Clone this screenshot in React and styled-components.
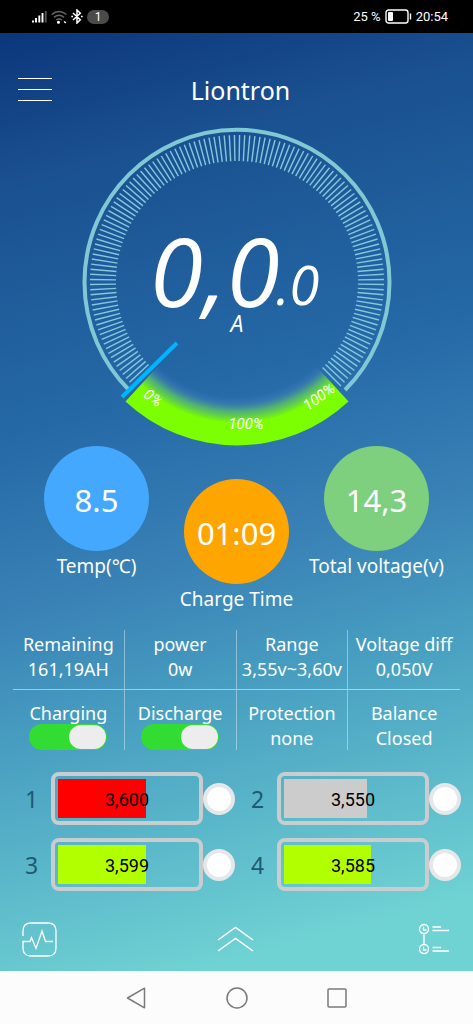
import React from "react"
import styled, { createGlobalStyle } from "styled-components"

const GlobalStyle = createGlobalStyle`
  * {
    box-sizing: border-box;
  }
  body {
    margin: 0;
    font-family: "Noto Sans", "Noto Sans CJK SC", sans-serif;
    color: #fff;
  }
  button {
    display: flex;
    padding: 0;
    border: 0;
    background: none;
    color: inherit;
    cursor: pointer;
  }
`

const Screen = styled.div`
  display: flex;
  flex-direction: column;
  min-height: 100vh;
`

const StatusBar = styled.div`
  display: flex;
  align-items: center;
  justify-content: space-between;
  height: 33px;
  padding: 0 25px 0 32px;
  background: #000;
  font: 13px/18px Roboto, sans-serif;
`

const StatusGroup = styled.div`
  display: flex;
  align-items: center;
  gap: 4px;
`

const Badge = styled.span`
  width: 22px;
  border-radius: 7px;
  background: #4b4b4b;
  font-size: 12px;
  line-height: 14px;
  text-align: center;
`

const Main = styled.main`
  display: flex;
  flex: 1;
  flex-direction: column;
  background: linear-gradient(
    165deg,
    #0b367b 0%,
    #1a508f 14%,
    #2569a7 38%,
    #3982b6 55%,
    #489fc1 68%,
    #66c6cf 87%,
    #6fd2d3 93%
  );
`

const Header = styled.header`
  display: grid;
  grid-template-columns: 36px 1fr 36px;
  align-items: center;
  height: 93px;
  padding: 20px 10px 0 18px;
`

const MenuButton = styled.button`
  flex-direction: column;
  gap: 10px;
`

const MenuLine = styled.span`
  width: 34px;
  height: 1px;
  background: #fff;
`

const Title = styled.h1`
  margin: 0;
  font-size: 25px;
  font-weight: 400;
  line-height: 32px;
  text-align: center;
`

const GaugeSvg = styled.svg`
  align-self: center;
  width: 336px;
  height: 320px;
  fill: #fff;
  font-family: "Open Sans", sans-serif;
  font-style: italic;
`

const Scale = styled.g`
  font-family: Roboto, sans-serif;
  font-size: 15px;
  text-anchor: middle;
`

const Stats = styled.section`
  display: grid;
  grid-template-columns: repeat(3, 140px);
  justify-content: center;
`

const Stat = styled.div`
  display: flex;
  flex-direction: column;
  align-items: center;
  margin-top: ${p => (p.$low ? 33 : 0)}px;
  font-size: 19px;
  line-height: 30px;
  white-space: nowrap;
`

const Disc = styled.div`
  display: flex;
  align-items: center;
  justify-content: center;
  width: 105px;
  height: 105px;
  padding-top: 2px;
  border-radius: 50%;
  background: ${p => p.$color};
  font-size: 31px;
`

const Info = styled.section`
  display: grid;
  grid-template-columns: repeat(4, 1fr);
  margin: 16px 13px 0;
`

const Cell = styled.div`
  display: flex;
  flex-direction: column;
  align-items: center;
  justify-content: center;
  height: 60px;
  padding-top: 11px;
  font-size: 18px;
  line-height: 25px;
  white-space: nowrap;

  &:not(:nth-child(4n)) {
    border-right: 1px solid rgba(255, 255, 255, 0.4);
  }
  &:nth-child(-n + 4) {
    padding: 0 0 6px;
    border-bottom: 1px solid rgba(255, 255, 255, 0.5);
  }
`

const SwitchLabel = styled.label`
  display: flex;
  flex-direction: column;
  align-items: center;
  line-height: 22px;
`

const Switch = styled.input`
  appearance: none;
  display: flex;
  justify-content: flex-end;
  width: 78px;
  height: 26px;
  margin: 0;
  padding: 1px;
  border-radius: 13px;
  background: #33dc33;

  &::before {
    content: "";
    width: 37px;
    border-radius: 12px;
    background: #ededed;
  }
  &:not(:checked) {
    justify-content: flex-start;
    background: #9aa;
  }
`

const Batteries = styled.section`
  display: grid;
  grid-template-columns: 1fr 1fr;
  gap: 13px 3px;
  margin: 22px 12px 0;
`

const Battery = styled.div`
  display: grid;
  grid-template-columns: 39px 1fr 32px;
  align-items: center;
`

const Index = styled.span`
  color: #205a70;
  font-size: 23px;
  text-align: center;
`

const Shell = styled.div`
  display: grid;
  align-items: center;
  height: 53px;
  padding: 3px;
  border: 4px solid #cacdcf;
  border-radius: 8px;
`

const Fill = styled.div`
  grid-area: 1 / 1;
  height: 39px;
  background: ${p => p.$color};
`

const Reading = styled.span`
  grid-area: 1 / 1;
  padding-top: 2px;
  color: #000;
  font: 18px/24px Roboto, sans-serif;
  text-align: center;
`

const Lamp = styled.span`
  height: 32px;
  border: 4px solid #e5e7e9;
  border-radius: 50%;
  background: #fff;
`

const Footer = styled.footer`
  display: grid;
  grid-template-columns: 1fr auto 1fr;
  align-items: center;
  height: 64px;
  margin-top: auto;
  padding: 0 24px 0 22px;

  button:last-child {
    justify-self: end;
  }
`

const NavBar = styled.nav`
  display: flex;
  align-items: center;
  justify-content: center;
  gap: 78px;
  height: 53px;
  background: #fcfcfc;
  color: #7a7a7a;
`

const Icon = styled.svg`
  display: block;
  fill: none;
  stroke: currentColor;
`

const cells = [
  { id: 1, value: "3,600", level: 64, color: "#ff0000" },
  { id: 2, value: "3,550", level: 60, color: "#cccccc" },
  { id: 3, value: "3,599", level: 64, color: "#b2ff00" },
  { id: 4, value: "3,585", level: 63, color: "#b2ff00" },
]

const ticks = Array.from({ length: 136 }, (_, i) => i * 2 - 135)

const Gauge = () => (
  <GaugeSvg viewBox="-168 -156 336 320" role="img" aria-label="Current 0,0.0 A">
    <defs>
      <radialGradient id="band" gradientUnits="userSpaceOnUse" cx="0" cy="0" r="164">
        <stop offset="0.7" stopColor="#3a78c8" stopOpacity="0" />
        <stop offset="0.74" stopColor="#3f80b4" stopOpacity="0.5" />
        <stop offset="0.79" stopColor="#5bc06a" stopOpacity="0.8" />
        <stop offset="0.86" stopColor="#7cff00" />
      </radialGradient>
    </defs>
    <path d="M-108 108A152.5 152.5 0 1 1 108 108" fill="none" stroke="#80c8d4" strokeWidth="4" />
    {ticks.map(angle => (
      <path key={angle} d="M0 -121V-147" stroke="#84c8de" strokeWidth="1.4" transform={`rotate(${angle})`} />
    ))}
    <path d="M-111.5 119.5A163.5 163.5 0 0 0 111.5 119.5L79 84A115 115 0 0 1 -79 84Z" fill="url(#band)" />
    <path d="M-115 115L-60 61" stroke="#00b4ff" strokeWidth="4" />
    <Scale>
      <text transform="translate(-87 120) rotate(37)">0%</text>
      <text x="9" y="147">100%</text>
      <text transform="translate(85 119) rotate(-36)">100%</text>
    </Scale>
    <text x="-87" y="25" fontSize="96">0,0</text>
    <text x="39" y="23" fontSize="54">.0</text>
    <text x="0" y="50" fontSize="23" textAnchor="middle">A</text>
  </GaugeSvg>
)

const ToggleCell = ({ id, label }) => (
  <Cell>
    <SwitchLabel htmlFor={id}>
      {label}
      <Switch id={id} type="checkbox" role="switch" defaultChecked />
    </SwitchLabel>
  </Cell>
)

const App = () => (
  <Screen>
    <GlobalStyle />
    <StatusBar>
      <StatusGroup>
        <Icon width="15" height="13" viewBox="0 0 15 13" strokeWidth="1.9">
          <path d="M1 10.5V12.5M4 8V12.5M7.3 5.5V12.5M10.5 3V12.5" />
          <path d="M13.7 1V12.5" stroke="#555" />
        </Icon>
        <Icon width="16" height="14" viewBox="0 0 16 14" strokeWidth="1.5">
          <path d="M.7 4.5Q8 -1.5 15.3 4.5M3 7.3Q8 3.2 13 7.3M5.2 10Q8 7.8 10.8 10" stroke="#666" />
          <circle cx="7.5" cy="12.3" r="0.8" fill="#fff" />
          <path d="M13 11.5l1.8 1.3" />
        </Icon>
        <Icon width="12" height="15" viewBox="0 0 12 15" strokeWidth="1.5">
          <path d="M2 4L9.3 10.8L6 14V1L9.3 4.2L2 11M.3 7.5H2M10 7.5H11.7" />
        </Icon>
        <Badge>1</Badge>
      </StatusGroup>
      <StatusGroup>
        <span>25 %</span>
        <Icon width="27" height="15" viewBox="0 0 27 15" strokeWidth="1.4">
          <rect x="1" y="1" width="22" height="13" rx="2.5" />
          <rect x="3" y="3" width="5" height="9" rx="1" fill="#fff" stroke="none" />
          <path d="M25.5 4.5V10.5" />
        </Icon>
        <span>20:54</span>
      </StatusGroup>
    </StatusBar>

    <Main>
      <Header>
        <MenuButton type="button" aria-label="Menu">
          <MenuLine />
          <MenuLine />
          <MenuLine />
        </MenuButton>
        <Title>Liontron</Title>
      </Header>

      <Gauge />

      <Stats>
        <Stat>
          <Disc $color="#45a8ff">8.5</Disc>
          Temp(℃)
        </Stat>
        <Stat $low>
          <Disc $color="#ffa500">01:09</Disc>
          Charge Time
        </Stat>
        <Stat>
          <Disc $color="#7ecf7e">14,3</Disc>
          Total voltage(v)
        </Stat>
      </Stats>

      <Info>
        <Cell>
          <span>Remaining</span>
          <span>161,19AH</span>
        </Cell>
        <Cell>
          <span>power</span>
          <span>0w</span>
        </Cell>
        <Cell>
          <span>Range</span>
          <span>3,55v~3,60v</span>
        </Cell>
        <Cell>
          <span>Voltage diff</span>
          <span>0,050V</span>
        </Cell>
        <ToggleCell id="charging" label="Charging" />
        <ToggleCell id="discharge" label="Discharge" />
        <Cell>
          <span>Protection</span>
          <span>none</span>
        </Cell>
        <Cell>
          <span>Balance</span>
          <span>Closed</span>
        </Cell>
      </Info>

      <Batteries>
        {cells.map(cell => (
          <Battery key={cell.id}>
            <Index>{cell.id}</Index>
            <Shell>
              <Fill $color={cell.color} style={{ width: `${cell.level}%` }} />
              <Reading>{cell.value}</Reading>
            </Shell>
            <Lamp />
          </Battery>
        ))}
      </Batteries>

      <Footer>
        <button type="button" aria-label="Activity">
          <Icon width="35" height="35" viewBox="0 0 35 35" strokeWidth="1.3">
            <path d="M1 14V9Q1 1 9 1H26Q34 1 34 9V26Q34 34 26 34H9Q1 34 1 26V19.5H8L9.5 15.5L14 26.5L20 9L23.5 19.5H31" />
          </Icon>
        </button>
        <button type="button" aria-label="Expand">
          <Icon width="37" height="26" viewBox="0 0 37 26" strokeWidth="1.5">
            <path d="M1 14L18.5 1.5L36 14M1 25L18.5 12.5L36 25" />
          </Icon>
        </button>
        <button type="button" aria-label="History">
          <Icon width="31" height="32" viewBox="0 0 31 32" strokeWidth="1.3">
            <circle cx="6" cy="6" r="4.5" />
            <circle cx="6" cy="26" r="4.5" />
            <path d="M6 10.5V21.5M5.5 3.5V7H8.5M5.5 23.5V27H8.5M14.5 4H23M14.5 7.5H31M14.5 24.5H23M14.5 28H31" />
          </Icon>
        </button>
      </Footer>
    </Main>

    <NavBar>
      <button type="button" aria-label="Back">
        <Icon width="22" height="22" viewBox="0 0 22 22" strokeWidth="1.5" strokeLinejoin="round">
          <path d="M1.5 11L18.5 1.2V20.8Z" />
        </Icon>
      </button>
      <button type="button" aria-label="Home">
        <Icon width="22" height="22" viewBox="0 0 22 22" strokeWidth="1.5">
          <circle cx="11" cy="11" r="10" />
        </Icon>
      </button>
      <button type="button" aria-label="Recent apps">
        <Icon width="22" height="22" viewBox="0 0 22 22" strokeWidth="1.5">
          <rect x="2" y="2" width="18" height="18" rx="1" />
        </Icon>
      </button>
    </NavBar>
  </Screen>
)

export default App
